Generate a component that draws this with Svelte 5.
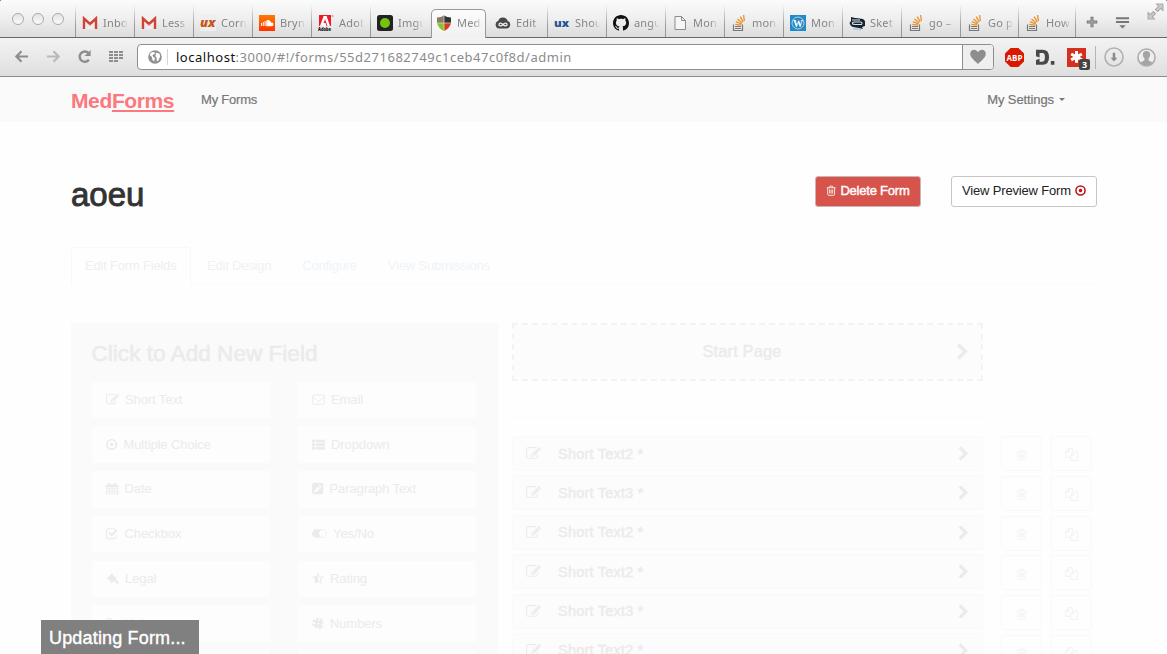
<script>
  const icons = {
    gmail: '<path d="M1 3h14v11H1z" fill="#f2f0ef"/><path d="M2 14V3.500l6 5.500 6-5.500V14" fill="none" stroke="#d04435" stroke-width="2.400"/><path d="M4 13l3-3.500M12 13L9 9.500" stroke="#ddd" stroke-width=".8"/>',
    ux: '<rect width="16" height="16" fill="#eee"/><text x="0" y="11.500" font-family="Open Sans" font-size="13" font-style="italic" font-weight="800" fill="#c4581c" textLength="15.500" lengthAdjust="spacingAndGlyphs">ux</text>',
    sound: '<defs><linearGradient id="scg" x2="0" y2="1"><stop stop-color="#ff7a00"/><stop offset="1" stop-color="#ff3300"/></linearGradient></defs><rect width="16" height="16" fill="url(#scg)"/><path d="M2.500 8v3M4.300 7v4M6.100 6v5" stroke="#fff" stroke-width="1"/><path d="M7.300 5.400a3.300 3.300 0 0 1 4.800 2.300 1.800 1.800 0 1 1 .4 3.500H7.300z" fill="#fff"/>',
    adobe: '<rect x="1" width="12" height="11" fill="#ed1c24"/><path d="M2 11L5.600 1h3L12 11H9.500L7.100 4.300 5.500 8h2l1 3z" fill="#fff"/><text x="0" y="15.600" font-family="Open Sans" font-size="5" font-weight="800" fill="#111" textLength="13" lengthAdjust="spacingAndGlyphs">Adobe</text><path d="M13.600 1h2" stroke="#888"/>',
    imgur: '<rect width="16" height="16" rx="2.500" fill="#222"/><circle cx="8" cy="8" r="5" fill="#74c30c"/>',
    shield: '<path d="M1 2.500Q5 2.500 8 .5V8H1z" fill="#8a7a68"/><path d="M15 2.500Q11 2.500 8 .5V8h7z" fill="#333"/><path d="M1 8h7v8Q2 13 1 8z" fill="#8bc425"/><path d="M15 8H8v8q6-3 7-8z" fill="#dc3a1c"/><path d="M8 .5V16M1 8h14" stroke="#ddd" stroke-width=".7"/>',
    cloud: '<path d="M4 13.500a4 4 0 0 1-.8-7.700A5 5 0 0 1 12.700 6 3.900 3.900 0 0 1 12 13.500z" fill="#484848"/><path d="M8 9.500C6.500 7.800 4 7.500 4 9.500s2.500 1.700 4 0 4-2 4 0-2.500 1.700-4 0" fill="none" stroke="#eee" stroke-width="1.300"/>',
    uxb: '<text x="0" y="11.500" font-family="Open Sans" font-size="10" font-weight="800" fill="#245596" textLength="15" lengthAdjust="spacingAndGlyphs">ux</text>',
    github: '<path fill="#111" d="M8 0C3.580 0 0 3.580 0 8c0 3.540 2.290 6.530 5.470 7.590.4.070.55-.17.55-.38 0-.19-.01-.82-.01-1.490-2.010.37-2.530-.49-2.690-.94-.09-.23-.48-.94-.82-1.130-.28-.15-.68-.52-.01-.53.63-.01 1.080.58 1.230.82.720 1.210 1.870.870 2.330.660.070-.52.280-.87.510-1.070-1.780-.2-3.640-.89-3.640-3.950 0-.87.310-1.590.820-2.150-.08-.2-.36-1.020.080-2.120 0 0 .67-.21 2.200.820.640-.18 1.320-.27 2-.27s1.360.090 2 .27c1.530-1.040 2.200-.82 2.200-.82.440 1.100.160 1.920.080 2.120.510.560.820 1.270.820 2.150 0 3.070-1.870 3.750-3.650 3.950.290.250.540.730.540 1.480 0 1.070-.01 1.930-.01 2.200 0 .21.150.460.550.380A8 8 0 0 0 16 8c0-4.420-3.580-8-8-8z"/>',
    page: '<path d="M3 1.500h6.500l4 4v9H3zM9.500 1.500v4h4" fill="#f6f6f6" stroke="#8b8b8b"/>',
    stack: '<path d="M2.500 9.500v6h9v-6M4 13.500h6M4 11.500h6" fill="none" stroke="#777" stroke-width="1.200"/><path d="M4.300 9.300l6 .8M4.900 6.700l5.700 2.300M6.500 4l4.600 4M9.200 1.700l3 5.100M12.600 0l.8 6" stroke="#ee9028" stroke-width="1.300" fill="none"/>',
    wp: '<rect width="16" height="16" fill="#238ac5"/><circle cx="8" cy="8" r="6" fill="none" stroke="#cbe3f1" stroke-width=".8"/><text x="3" y="12" font-family="Liberation Serif" font-size="11" font-weight="700" fill="#fff" textLength="10" lengthAdjust="spacingAndGlyphs">W</text>',
    sketch: '<path d="M2 2l4 1h1l7 1 1 1 1 1v5l-3 1 1 2-4-1-6-1-2-1L.500 8 2 6z" fill="#152232"/><path d="M3 5h8M3.500 9q-.5-2 2-2h6q2.500.5 1 2.500H6z" stroke="#dce4ea" fill="none" stroke-width="1.100"/><path d="M4 14h6l2 1" stroke="#a9c8de" stroke-width="1.500" fill="none"/>',
    edit: '<path transform="scale(.0089286)" d="M888 1184l116-116-152-152-116 116v56h96v96h56zm440-720q-16-16-33 1l-350 350q-17 17-1 33t33-1l350-350q17-17 1-33zm80 594v190q0 119-84.500 203.500t-203.500 84.500h-832q-119 0-203.500-84.500t-84.500-203.500v-832q0-119 84.500-203.500t203.500-84.500h832q63 0 117 25 15 7 18 23 3 17-9 29l-49 49q-14 14-32 8-23-6-45-6h-832q-66 0-113 47t-47 113v832q0 66 47 113t113 47h832q66 0 113-47t47-113v-126q0-13 9-22l64-64q15-15 35-7t20 29zm-96-738l288 288-672 672h-288v-288zm444 132l-92 92-288-288 92-92q28-28 68-28t68 28l152 152q28 28 28 68t-28 68z"/>',
    target: '<circle cx="7" cy="8" r="5.800" fill="none" stroke="currentColor" stroke-width="2"/><circle cx="7" cy="8" r="2.200"/>',
    mail: '<path d="M.7 4a1.300 1.300 0 0 1 1.300-1.300h12A1.300 1.300 0 0 1 15.300 4v8.700A1.300 1.300 0 0 1 14 14H2a1.300 1.300 0 0 1-1.300-1.300zM1 4.500l5.500 5q1.500 1 3 0l5.500-5" fill="none" stroke="currentColor" stroke-width="1.200"/>',
    list: '<path d="M0 2h4v3.500H0zM5 2h11v3.500H5zM0 6.500h4V10H0zM5 6.500h11V10H5zM0 11h4v3.500H0zM5 11h11v3.500H5z"/>',
    calendar: '<path fill-rule="evenodd" d="M2 3h1V1q1-1 2 0v2h5V1q1-1 2 0v2h1q2 0 2 1v11H0V4q0-1 2-1zM1.200 6v2h2.200V6zm3.200 0v2H7V6zM8 6v2h2.500V6zm3.500 0v2h2.300V6zM1.200 9v2h2.200V9zm3.200 0v2H7V9zM8 9v2h2.500V9zm3.500 0v2h2.300V9zM1.200 12v2h2.200v-2zm3.200 0v2H7v-2zM8 12v2h2.500v-2zm3.500 0v2h2.300v-2z"/>',
    pensq: '<path fill-rule="evenodd" d="M3 1h8q3 0 3 3v8q0 3-3 3H3q-3 0-3-3V4q0-3 3-3zm0 9v2.500h2.500l4.200-4.200L7.200 5.800zm5-5l2.500 2.500 1.500-1.500L9.500 3.500z"/>',
    check: '<path d="M12.500 9.500V12q0 2.300-2.300 2.300H3Q.7 14.300.7 12V4.500Q.7 2.200 3 2.200h7.200q.8 0 1.500.4" fill="none" stroke="currentColor" stroke-width="1.300"/><path d="M4 7l3 3 6.500-6.500" fill="none" stroke="currentColor" stroke-width="2.500"/>',
    toggle: '<path fill-rule="evenodd" d="M5.500 2.500h8a5.500 5.500 0 0 1 0 11h-8a5.500 5.500 0 0 1 0-11zm8 1a4.500 4.500 0 1 0 0 9 4.500 4.500 0 0 0 0-9z"/>',
    gavel: '<path d="M.8 8.300L7.500 1.500l1 .8-.5.900 3.500 3.500.8-.5 1 1L7 13.700l-1-1 .3-.8-3.400-3.500-1 .7z"/><path d="M9.500 8.500l5.300 5.500" stroke="currentColor" stroke-width="2.900"/>',
    star: '<path d="M7.500.5l2.200 4.600 5 .7L11 9.400l1 5.100-4.500-2.400-4.500 2.400 1-5.100L.3 5.800l5-.7zm0 2.700v7.600l2.900 1.600-.7-3.400 2.500-2.300-3.300-.5z" fill-rule="evenodd"/>',
    hash: '<path d="M7 1L4.500 14M11.500 2L9 15M1 4.500l13 2.300M.5 9.500L13.500 12" fill="none" stroke="currentColor" stroke-width="2.800"/>',
    link: '<circle cx="4" cy="4.500" r="3" fill="none" stroke="currentColor" stroke-width="1.300"/><path d="M7 7l6 6" stroke="currentColor" stroke-width="2"/>',
    trash: '<path d="M1 4h13M4.800 4l.9-2.400h3.600l.9 2.400M2.500 4v9.500q0 1.500 1.300 1.500h7.400q1.300 0 1.300-1.500V4M5.200 6.500v6M7.500 6.500v6M9.800 6.500v6" fill="none" stroke="currentColor" stroke-width="1.200"/>',
    copy: '<path d="M7 11.500H.7V5L4.500.8h5v4M4.700.8V5H.7M7 15.300V8.500L10.500 4.800h4.800v10.500zM10.700 5v3.700H7" fill="none" stroke="currentColor" stroke-width="1.200"/>',
    chevron: '<path d="M4 1.500L10.500 8 4 14.500" fill="none" stroke="currentColor" stroke-width="3.400"/>',
    back: '<path d="M8 2.500L2.500 8l5.500 5.500M3 8h12" fill="none" stroke="currentColor" stroke-width="2.300"/>',
    forward: '<path d="M8 2.500l5.500 5.500L8 13.500M13 8H1" fill="none" stroke="currentColor" stroke-width="2.300"/>',
    reload: '<path d="M12.700 11.500A5.500 5.500 0 1 1 12 4" fill="none" stroke="currentColor" stroke-width="2.500"/><path d="M14.500 1v6.500H8z"/>',
    grid: '<path d="M0 2h4v2H0zM5 2h4v2H5zM10 2h4v2h-4zM0 5h4v2H0zM5 5h4v2H5zM10 5h4v2h-4zM0 8h4v2H0zM5 8h4v2H5zM10 8h4v2h-4zM0 11h4v2H0zM5 11h4v2H5z"/>',
    globe: '<circle cx="8" cy="8" r="7.800"/><path d="M3 3l4-1 1 2-3 2 1 2 2 1-1 4-2-2-.5-3L2 6zM9 3l4 1 1 3-2 5-2 1V9L8.500 7z" fill="#fff"/>',
    heart: '<path d="M8 15C3 10.500.2 8 .2 4.800.2 2.400 2 .8 4.200.8 5.900.8 7.200 1.800 8 3.200 8.800 1.800 10.100.8 11.800.8c2.200 0 4 1.600 4 4C15.800 8 13 10.500 8 15z"/>',
    abp: '<path d="M4.700 0h6.600L16 4.700v6.600L11.300 16H4.700L0 11.300V4.700z" fill="#d81900"/><text x="1.300" y="11" font-family="Open Sans" font-size="8" font-weight="700" fill="#fff" textLength="13.400" lengthAdjust="spacingAndGlyphs">ABP</text>',
    dd: '<path fill-rule="evenodd" d="M0 1.500h5.500q5.500 0 5.500 6.300T5.500 14H0V10l3-1v2.500h2.500q2 0 2-3.700t-2-3.600H3V8L0 7z" fill="#484848"/><path d="M12.500 11h3v3h-3z" fill="#484848"/>',
    last: '<rect width="16" height="16" fill="#d5301e"/><path d="M8 2.500v10M3.500 5l9 5M12.500 5l-9 5" stroke="#fff" stroke-width="2.500"/>',
    down: '<circle cx="8" cy="8" r="7.200" fill="none" stroke="#b2b2b2" stroke-width="1.300"/><path d="M7 4.500h2v4h1.700L8 11.500 5.300 8.500H7z" fill="#8a8a8a"/>',
    user: '<circle cx="8" cy="8" r="7.200" fill="#eee" stroke="#aaa" stroke-width="1.300"/><path d="M8 2.500c4 0 3.500 4.500 1.700 6.300v1.700l3.500 1.700a7 7 0 0 1-10.400 0l3.500-1.700V8.800C4.500 7 4 2.500 8 2.500z" fill="#a4a4a4"/>',
    plus: '<path d="M8 2v12M2 8h12" stroke="currentColor" stroke-width="3.400"/><path d="M8 3v10M3 8h10" stroke="#b0b0b0" stroke-width="1.200"/>',
    menu: '<path d="M1 3.500h14M1 7.500h14" stroke="currentColor" stroke-width="2"/><path d="M4.500 11h7L8 14.500z"/>',
    expand: '<path d="M9 1h6v6l-2-2-3 3-2-2 3-3zM7 15H1V9l2 2 3-3 2 2-3 3z" fill="#ccc" stroke="#aaa" stroke-width="1"/>'
  };

  const tabs = [
    ['gmail', 'Inbo'], ['gmail', 'Less'], ['ux', 'Corn'], ['sound', 'Bryn'], ['adobe', 'Adob'],
    ['imgur', 'Imgu'], ['shield', 'Med', 'active'], ['cloud', 'Edit', 'after'], ['uxb', 'Shou'],
    ['github', 'angu'], ['page', 'Mon'], ['stack', 'mon'], ['wp', 'Mon'], ['sketch', 'Sket'],
    ['stack', 'go –'], ['stack', 'Go p', 'narrow'], ['stack', 'How', 'narrower']
  ];
  const fields = [
    ['edit', 'Short Text', 33], ['mail', 'Email', 33], ['target', 'Multiple Choice', 31.5], ['list', 'Dropdown', 33],
    ['calendar', 'Date', 32.5], ['pensq', 'Paragraph Text', 31.5], ['check', 'Checkbox', 32.5], ['toggle', 'Yes/No', 35],
    ['gavel', 'Legal', 33], ['star', 'Rating', 32], ['link', 'Link', 32], ['hash', 'Numbers', 32], ['', '', 0], ['', '', 0]
  ];
  const rows = ['Short Text2 *', 'Short Text3 *', 'Short Text2 *', 'Short Text2 *', 'Short Text3 *', 'Short Text2 *'];
</script>

{#snippet icon(name, size = 16, vb = '0 0 16 16')}
  <svg class="icon" width={size} height={size} viewBox={vb} fill="currentColor">{@html icons[name]}</svg>
{/snippet}

<div class="window">
  <header class="tabbar">
    <div class="lights"><i></i><i></i><i></i></div>
    {#each tabs as [ic, title, kind]}
      <div class="tab {kind ?? ''}">{@render icon(ic)}<span>{title}</span></div>
    {/each}
    <div class="tabtools">{@render icon('plus', 14)}{@render icon('menu', 15)}</div>
    <div class="expand">{@render icon('expand', 17)}</div>
  </header>

  <div class="toolbar">
    <div class="navicons">
      {@render icon('back', 15)}
      <span class="dim">{@render icon('forward', 15)}</span>
      {@render icon('reload', 15)}
      {@render icon('grid', 16)}
    </div>
    <div class="address">
      <span class="globe">{@render icon('globe', 14)}</span>
      <span class="url"><b>localhost</b>:3000/#!/forms/55d271682749c1ceb47c0f8d/admin</span>
      <span class="fav">{@render icon('heart', 16)}</span>
    </div>
    <div class="ext">
      {@render icon('abp', 19)}
      {@render icon('dd', 19)}
      <span class="last">{@render icon('last', 19)}<em>3</em></span>
    </div>
    <div class="account">{@render icon('down', 20)}{@render icon('user', 19)}</div>
  </div>

  <nav>
    <span class="brand">Med<u>Forms</u></span>
    <span class="link">My Forms</span>
    <span class="link settings">My Settings<i class="caret"></i></span>
  </nav>

  <main>
    <div class="title">
      <h1>aoeu</h1>
      <button class="delete">{@render icon('trash', 11)}<span>Delete Form</span></button>
      <button class="preview"><span>View Preview Form</span><span class="red">{@render icon('target', 11, '0 1 14 14')}</span></button>
    </div>

    <div class="tabs">
      <span class="t on">Edit Form Fields</span>
      <span class="t grey">Edit Design</span>
      <span class="t">Configure</span>
      <span class="t">View Submissions</span>
    </div>

    <div class="columns">
      <section class="panel">
        <h3>Click to Add New Field</h3>
        <div class="fields">
          {#each fields as [ic, label, left]}
            <div class="field">
              {#if ic}
                <span class="fi" style="width:{left - 13.5}px">{@render icon(ic, ic === 'toggle' ? 15 : 13, ic === 'toggle' ? '0 0 19 16' : '0 0 16 16')}</span><span>{label}</span>
              {/if}
            </div>
          {/each}
        </div>
      </section>

      <section class="form">
        <div class="start"><div><span>Start Page</span>{@render icon('chevron', 17)}</div></div>
        <hr />
        <div class="list">
          {#each rows as r}
            <div class="row">{@render icon('edit', 15)}<span>{r}</span>{@render icon('chevron', 15)}</div>
          {/each}
        </div>
      </section>

      <section class="actions">
        {#each rows as _}
          <div class="act">{@render icon('trash', 12)}</div>
          <div class="act">{@render icon('copy', 13)}</div>
        {/each}
      </section>
    </div>
  </main>

  <div class="status">Updating Form...</div>
</div>

<style>
  :global(body) { background: #000; overflow: hidden; }
  .window {
    width: 1167px; height: 654px; overflow: hidden; position: relative; box-sizing: border-box;
    background: #fefefe; border-radius: 2px 2px 0 0;
    font-family: "Liberation Sans", Arial, sans-serif; font-size: 13px; color: #333;
  }
  .window :global(*) { box-sizing: border-box; }
  .icon { display: block; flex: none; }

  .tabbar { height: 38px; display: flex; background: linear-gradient(#fbfbfb, #efefef 50%, #dcdcdc); border-bottom: 1px solid #686868; position: relative; }
  .lights { width: 75px; display: flex; gap: 8px; padding: 13px 0 0 12px; flex: none; }
  .lights i { width: 12px; height: 12px; border: 1px solid #aaa; border-radius: 50%; background: linear-gradient(#e4e4e4, #fafafa); }
  .tab { width: 59px; flex: none; display: flex; padding: 15px 0 0 6px; gap: 5px; border-left: 1px solid; border-image: linear-gradient(transparent 15%, #999 70%) 1; color: #858585; }
  .tab span {
    font: 11px/16px "Noto Sans", sans-serif; letter-spacing: .2px; width: 26px; overflow: hidden; white-space: nowrap;
    mask-image: linear-gradient(90deg, #000 65%, transparent 98%);
  }
  .tab.narrow { width: 58px; }
  .tab.narrower { width: 57px; }
  .tab.after { border-color: transparent; border-image: none; }
  .tab.active {
    height: 29px; width: 55px; margin: 9px 2px 0; padding: 5px 0 0 4px;
    border: 1px solid #999; border-bottom: 0; border-image: none; border-radius: 5px 5px 0 0; background: linear-gradient(#fcfcfc, #f0f0f0); z-index: 1;
  }
  .tabtools { display: flex; gap: 16px; width: 92px; padding: 15px 0 0 9px; border-left: 1px solid; border-image: linear-gradient(transparent 15%, #999 70%) 1; color: #777; }
  .expand { position: absolute; right: 3px; top: 3px; }

  .toolbar { height: 39px; display: flex; align-items: center; background: linear-gradient(#f3f3f3, #dfdfdf); border-bottom: 1px solid #8c8c8c; color: #8d8d8d; }
  .navicons { width: 137px; display: flex; gap: 16px; padding-left: 14px; }
  .navicons :global(svg:last-child) { margin-left: 1px; }
  .dim { color: #b9b9b9; }
  .address { width: 857px; height: 26px; display: flex; align-items: center; background: #fff; border: 1px solid #8e8e8e; border-radius: 4px; overflow: hidden; }
  .globe { width: 30px; height: 16px; padding: 1px 0 0 10px; border-right: 1px solid #d5d5d5; color: #909090; }
  .url { flex: 1; padding-left: 8px; font: 13px/24px "Noto Sans", sans-serif; letter-spacing: .52px; color: #8b8b8b; white-space: nowrap; }
  .url b { font-weight: 400; color: #111; }
  .fav { width: 31px; height: 24px; padding: 4px 7px; background: #efefef; border-left: 1px solid #8e8e8e; }
  .ext { display: flex; gap: 12px; padding-left: 11px; width: 102px; height: 23px; border-right: 1px solid #b5b5b5; align-items: center; margin-right: 8px; }
  .last { position: relative; }
  .last em { position: absolute; left: 12px; top: 11px; width: 11px; height: 11px; border-radius: 2px; background: #444; color: #fff; font: 700 9px/11px "Open Sans", sans-serif; text-align: center; }
  .account { display: flex; gap: 13px; align-items: center; }

  nav { height: 45px; display: flex; align-items: center; padding: 0 102px 0 71px; background: #fafafa; color: #777; }
  .brand { width: 130px; font-size: 21px; font-weight: 700; letter-spacing: -.38px; color: #fa787e; padding-top: 2px; }
  .brand u { text-decoration-thickness: 2px; text-underline-offset: 2px; text-decoration-skip-ink: none; }
  .link { letter-spacing: -.2px; -webkit-text-stroke: .2px #777; }
  .settings { margin-left: auto; display: flex; align-items: center; gap: 5px; letter-spacing: -.1px; }
  .caret { border: 3.5px solid transparent; border-top-color: #777; border-bottom: 0; }

  main { padding: 54px 70px 0 71px; }
  .title { display: flex; height: 71px; }
  h1 { flex: 1; margin: 0; font-size: 33px; font-weight: 400; line-height: 38px; -webkit-text-stroke: .9px #333; }
  button { height: 31px; border-radius: 3px; display: flex; align-items: center; justify-content: center; font: 13px "Liberation Sans", Arial, sans-serif; white-space: nowrap; padding: 0 0 2px; }
  .delete { width: 106px; margin-right: 30px; gap: 3px; color: #fff; background: #d6544c; border: 1px solid #ccb5b5; letter-spacing: -.22px; }
  .delete span { -webkit-text-stroke: .4px #fff; }
  .preview { width: 146px; gap: 4px; background: #fff; border: 1px solid #c6c6c6; color: #222; letter-spacing: -.17px; }
  .red { color: #bd1313; }

  .tabs { display: flex; height: 38px; border-bottom: 1px solid #fafafa; font-size: 13px; line-height: 38px; letter-spacing: -.2px; }
  .t { color: #eef4f9; padding: 0 15px; margin-right: 1px; }
  .t.on { height: 38px; width: 120px; padding: 0 0 0 13px; margin-right: 1px; line-height: 36px; border: 1px solid #f8f8f8; border-bottom-color: #fefefe; border-radius: 3px 3px 0 0; color: #efefef; }
  .t.grey { color: #f1f1f1; }

  .columns { display: flex; padding-top: 38px; color: #ebebeb; }
  .panel { width: 427px; height: 340px; background: #fafafa; padding: 17px 22px 0 21px; flex: none; }
  h3 { margin: 0 0 0 -.5px; height: 41.500px; font-size: 22.600px; line-height: 27px; font-weight: 400; -webkit-text-stroke: .6px #ebebeb; white-space: nowrap; }
  .fields { display: grid; grid-template-columns: 178px 178px; column-gap: 28px; row-gap: 8.300px; }
  .field { height: 36.500px; background: #fdfdfd; display: flex; align-items: center; padding: 0 0 1px 13.500px; letter-spacing: -.1px; white-space: nowrap; }

  .form { width: 471px; margin-left: 14px; flex: none; }
  .start { height: 58px; border: 2px dashed #f3f3f3; padding-bottom: 1px; }
  .start div { height: 53px; background: #fcfcfc; display: flex; align-items: center; padding-right: 10px; font-size: 16.500px; -webkit-text-stroke: .4px #ebebeb; }
  .start span { flex: 1; text-align: center; padding-left: 16px; letter-spacing: .1px; }
  hr { border: 0; height: 1px; background: #fafafa; margin: 36px 0 18px; }
  .list { display: flex; flex-direction: column; gap: 4.400px; }
  .row { height: 35px; flex: none; background: #fcfcfc; border: 1px solid #f9f9f9; border-radius: 3px; display: flex; align-items: center; padding: 0 11px 0 13px; font-size: 14.500px; letter-spacing: .22px; -webkit-text-stroke: .4px #ebebeb; }
  .row span { flex: 1; padding-left: 17px; }

  .actions { margin: 113px 0 0 18px; display: grid; grid-template-columns: 41px 41px; grid-auto-rows: 35px; gap: 4.750px 9px; align-content: start; color: #f2f2f2; }
  .act { border: 1px solid #f9f9f9; border-radius: 3px; display: grid; place-items: center; padding-top: 2px; background: #fefefe; }

  .status { position: absolute; left: 41px; bottom: 0; width: 158px; height: 34px; padding-left: 8px; background: #808080; color: #fff; font-size: 18px; line-height: 36px; letter-spacing: .17px; -webkit-text-stroke: .4px #fff; white-space: nowrap; }
</style>
